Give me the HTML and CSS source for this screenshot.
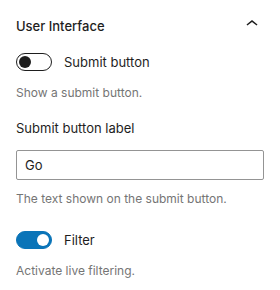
FILE: index.html
```html
<!DOCTYPE html>
<html>
<head>
<meta charset="utf-8">
<link rel="stylesheet" href="styles.css">
</head>
<body>
<div class="panel">
  <div class="panel-header">
    <span class="panel-title">User Interface</span>
    <svg class="chevron" width="24" height="24" viewBox="0 0 24 24"><path d="M6.5 12.4L12 8l5.5 4.4-.9 1.2L12 10l-4.6 3.6-.9-1.2z"/></svg>
  </div>
  <div class="panel-body">
    <div class="toggle-row">
      <span class="toggle"><span class="thumb"></span></span>
      <span class="toggle-label">Submit button</span>
    </div>
    <p class="help help-toggle">Show a submit button.</p>

    <label class="field-label">Submit button label</label>
    <div class="input">Go</div>
    <p class="help help-input">The text shown on the submit button.</p>

    <div class="toggle-row toggle-row-2">
      <span class="toggle on"><span class="thumb"></span></span>
      <span class="toggle-label">Filter</span>
    </div>
    <p class="help help-toggle">Activate live filtering.</p>
  </div>
</div>
</body>
</html>
```

FILE: styles.css
```css
html, body {
  margin: 0;
  padding: 0;
  background: #ffffff;
}
body {
  font-family: Inter, "Noto Sans", sans-serif;
  color: #1e1e1e;
  width: 280px;
  height: 290px;
  overflow: hidden;
}
.panel-header {
  height: 48px;
  display: flex;
  align-items: center;
  justify-content: space-between;
  padding: 0 16px;
}
.panel-title {
  font-size: 13px;
  font-weight: 500;
  line-height: 18px;
  margin-top: 3px;
}
.chevron {
  fill: #1e1e1e;
}
.panel-body {
  padding: 5px 16px 0;
}
.toggle-row {
  display: flex;
  align-items: center;
  gap: 12px;
  height: 18px;
}
.toggle {
  box-sizing: border-box;
  width: 36px;
  height: 18px;
  border: 1px solid #1e1e1e;
  border-radius: 9px;
  background: #fff;
  position: relative;
  flex: none;
}
.toggle .thumb {
  position: absolute;
  top: 2px;
  left: 2px;
  width: 12px;
  height: 12px;
  border-radius: 50%;
  background: #1e1e1e;
}
.toggle.on {
  background: #0a74b8;
  border-color: #0a74b8;
}
.toggle.on .thumb {
  left: auto;
  right: 2px;
  background: #fff;
}
.toggle-label {
  font-size: 13px;
  line-height: 18px;
}
.help {
  margin: 0;
  font-size: 12px;
  line-height: 16px;
  color: #757575;
}
.help-toggle {
  margin-top: 14px;
}
.field-label {
  display: block;
  font-size: 13px;
  line-height: 18px;
  margin-top: 18px;
}
.input {
  box-sizing: border-box;
  margin-top: 13px;
  height: 30px;
  border: 1px solid #949494;
  border-radius: 2px;
  padding: 0 8px;
  font-size: 13px;
  line-height: 28px;
}
.help-input {
  margin-top: 11px;
}
.toggle-row-2 {
  margin-top: 24px;
}
```
